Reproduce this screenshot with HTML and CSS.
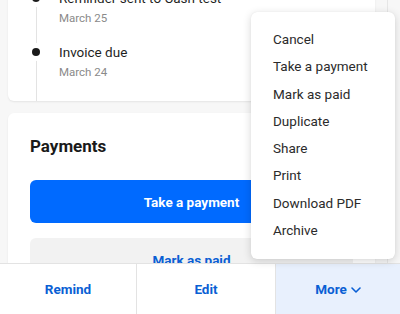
FILE: index.html
```html
<!DOCTYPE html>
<html lang="en">
<head>
    <meta charset="UTF-8">
    <meta name="viewport" content="width=device-width, initial-scale=1.0">
    <title>Invoice</title>
    <link rel="stylesheet" href="styles.css">
</head>
<body>
    <div class="screen">
        <div class="page">
            <div class="card timeline-card">
                <ul class="timeline">
                    <li class="event">
                        <p class="event-title">Reminder sent to Cash test</p>
                        <p class="event-date">March 25</p>
                    </li>
                    <li class="event">
                        <p class="event-title">Invoice due</p>
                        <p class="event-date">March 24</p>
                    </li>
                </ul>
            </div>

            <div class="card payments-card">
                <h2>Payments</h2>
                <button class="btn btn-primary">Take a payment</button>
                <button class="btn btn-secondary">Mark as paid</button>
            </div>
        </div>

        <!-- More menu -->
        <div class="more-menu">
            <a href="#">Cancel</a>
            <a href="#">Take a payment</a>
            <a href="#">Mark as paid</a>
            <a href="#">Duplicate</a>
            <a href="#">Share</a>
            <a href="#">Print</a>
            <a href="#">Download PDF</a>
            <a href="#">Archive</a>
        </div>

        <div class="action-bar">
            <button class="action">Remind</button>
            <button class="action">Edit</button>
            <button class="action action-active">More
                <svg class="chevron" width="10" height="6" viewBox="0 0 10 6"><path d="M1 1l4 4 4-4" fill="none" stroke="currentColor" stroke-width="1.6" stroke-linecap="round" stroke-linejoin="round"/></svg>
            </button>
        </div>
    </div>
</body>
</html>
```

FILE: styles.css
```css
* {
    margin: 0;
    padding: 0;
    box-sizing: border-box;
}

body {
    background: #f7f7f7;
    font-family: 'Roboto', 'Helvetica Neue', sans-serif;
    color: #1f1f1f;
    overflow: hidden;
}

.screen {
    position: relative;
    height: 314px;
    overflow: hidden;
    display: flex;
    flex-direction: column;
}

.page {
    flex: 1;
    display: flex;
    flex-direction: column;
    gap: 12px;
    padding: 0 25px 0 8px;
    margin-top: -32px;
    border-right: 1px solid #e6e6e6;
    margin-right: 12px;
    overflow: hidden;
}

.card {
    background: #fff;
    border-radius: 6px;
    box-shadow: 0 1px 2px rgba(0, 0, 0, 0.08);
    width: 367px;
    flex-shrink: 0;
}

/* Timeline */
.timeline-card {
    padding: 20px 0 19px 24px;
}

.timeline {
    list-style: none;
    position: relative;
}

.timeline::before {
    content: '';
    position: absolute;
    left: 3.5px;
    top: -20px;
    bottom: -19px;
    width: 1px;
    background: #e3e3e3;
}

.event {
    position: relative;
    padding-left: 27px;
    margin-bottom: 14px;
}

.event:last-child {
    margin-bottom: 0;
}

.event::before {
    content: '';
    position: absolute;
    left: 0;
    top: 6px;
    width: 8px;
    height: 8px;
    border-radius: 50%;
    background: #1a1a1a;
    box-shadow: 0 0 0 5px #fff;
}

.event-title {
    font-size: 13.5px;
    line-height: 20px;
    color: #1f1f1f;
}

.event-date {
    font-size: 11.5px;
    line-height: 20px;
    color: #8a8a8a;
}

/* Payments */
.payments-card {
    padding: 21px 22px 30px 22px;
    display: flex;
    flex-direction: column;
}

.payments-card h2 {
    font-size: 17px;
    font-weight: 700;
    line-height: 24px;
    color: #1a1a1a;
    margin-bottom: 22px;
}

.btn {
    font-family: inherit;
    font-size: 13.5px;
    font-weight: 700;
    height: 43px;
    border: none;
    border-radius: 6px;
    cursor: pointer;
}

.btn-primary {
    background: #006aff;
    color: #fff;
}

.btn-secondary {
    background: #f2f2f2;
    color: #0a5fd4;
    margin-top: 15px;
}

/* Bottom actions */
.action-bar {
    display: grid;
    grid-template-columns: 136px 139px 1fr;
    height: 51px;
    background: #fff;
    border-top: 1px solid #e3e3e3;
    flex-shrink: 0;
}

.action {
    font-family: inherit;
    font-size: 13.5px;
    font-weight: 700;
    color: #0a5fd4;
    background: #fff;
    border: none;
    border-left: 1px solid #e3e3e3;
    display: flex;
    justify-content: center;
    align-items: center;
    gap: 4px;
}

.action:first-child {
    border-left: none;
}

.action-active {
    background: #e8f0fd;
}

.chevron {
    margin-top: 2px;
}

/* Dropdown */
.more-menu {
    position: absolute;
    top: 12px;
    left: 251px;
    width: 144px;
    height: 247px;
    background: #fff;
    border-radius: 6px;
    box-shadow: 0 2px 8px rgba(0, 0, 0, 0.16), 0 0 1px rgba(0, 0, 0, 0.1);
    padding: 14px 0 0 22px;
    display: flex;
    flex-direction: column;
}

.more-menu a {
    font-size: 13.5px;
    line-height: 27.3px;
    color: #2b2b2b;
    text-decoration: none;
    white-space: nowrap;
}
```
